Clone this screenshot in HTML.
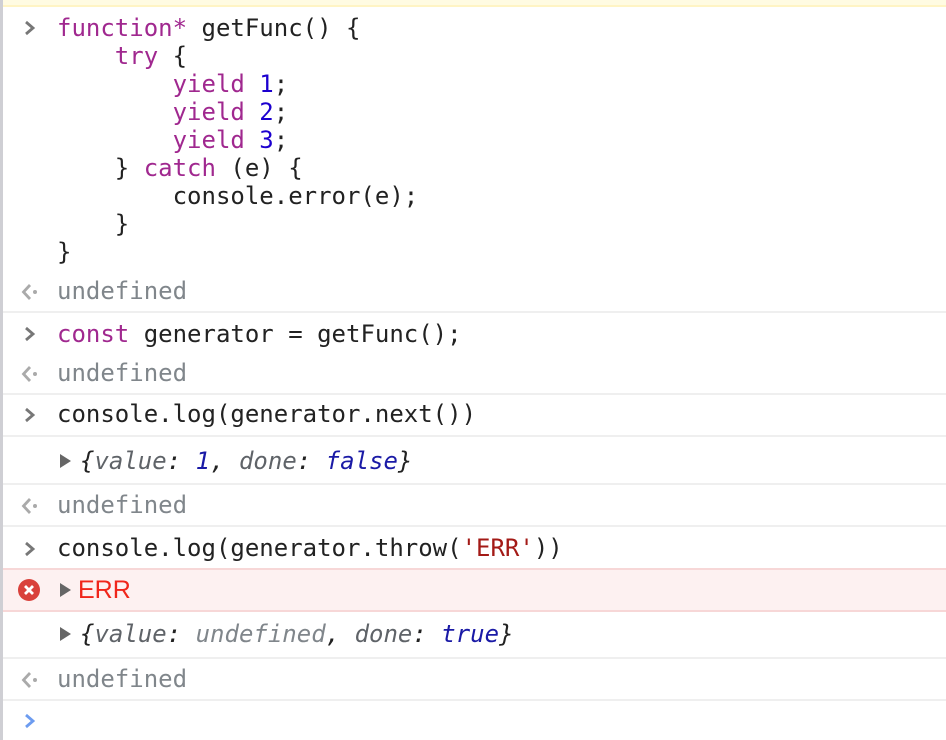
<!DOCTYPE html>
<html><head><meta charset="utf-8"><style>
html,body{margin:0;padding:0;width:946px;height:740px;overflow:hidden;background:#fff;}
body{position:relative;font-family:"DejaVu Sans Mono","Liberation Mono",monospace;font-size:24px;color:#222;}
.bar{position:absolute;left:0;top:0;width:3px;height:740px;background:#cfcfd4;}
.top{position:absolute;left:3px;top:0;right:0;height:5px;background:#fffbe2;border-bottom:2px solid #fff4c4;}
.l{position:absolute;left:57px;height:28px;line-height:28px;white-space:pre;}
.sep{position:absolute;left:3px;right:0;height:2px;background:#efefef;}
.k{color:#a0288f}.n{color:#1c00cf}.s{color:#a31a16}.u{color:#80868b}
.obj{font-style:italic;color:#222}.key{color:#5f6368}.v{color:#1a1aa6}.ud{color:#80868b}
.tri{position:absolute;left:60px;width:0;height:0;border-top:7px solid transparent;border-bottom:7px solid transparent;border-left:11px solid #666;}
.err{position:absolute;left:3px;right:0;top:568px;height:40px;background:#fdf1f1;border-top:2px solid #f7d7d7;border-bottom:2px solid #f7d7d7;}
</style></head><body>
<div class="bar"></div><div class="top"></div>
<svg style="position:absolute;left:23px;top:19px" width="14" height="18"><path d="M3 3 L10 9 L3 15" stroke="#777" stroke-width="2.8" fill="none"/></svg>
<div class="l" style="top:14px"><span class="k">function*</span> getFunc() {</div>
<div class="l" style="top:42px">    <span class="k">try</span> {</div>
<div class="l" style="top:70px">        <span class="k">yield</span> <span class="n">1</span>;</div>
<div class="l" style="top:98px">        <span class="k">yield</span> <span class="n">2</span>;</div>
<div class="l" style="top:126px">        <span class="k">yield</span> <span class="n">3</span>;</div>
<div class="l" style="top:154px">    } <span class="k">catch</span> (e) {</div>
<div class="l" style="top:182px">        console.error(e);</div>
<div class="l" style="top:210px">    }</div>
<div class="l" style="top:238px">}</div>

<svg style="position:absolute;left:20px;top:282px" width="20" height="20"><path d="M10 3 L3.5 10 L10 17" stroke="#aaa" stroke-width="2.8" fill="none"/><circle cx="15" cy="10" r="2" fill="#aaa"/></svg>
<div class="l u" style="top:277px">undefined</div>
<div class="sep" style="top:311px"></div>

<svg style="position:absolute;left:23px;top:325px" width="14" height="18"><path d="M3 3 L10 9 L3 15" stroke="#777" stroke-width="2.8" fill="none"/></svg>
<div class="l" style="top:320px"><span class="k">const</span> generator = getFunc();</div>
<svg style="position:absolute;left:20px;top:364px" width="20" height="20"><path d="M10 3 L3.5 10 L10 17" stroke="#aaa" stroke-width="2.8" fill="none"/><circle cx="15" cy="10" r="2" fill="#aaa"/></svg>
<div class="l u" style="top:359px">undefined</div>
<div class="sep" style="top:393px"></div>

<svg style="position:absolute;left:23px;top:406px" width="14" height="18"><path d="M3 3 L10 9 L3 15" stroke="#777" stroke-width="2.8" fill="none"/></svg>
<div class="l" style="top:400px">console.log(generator.next())</div>
<div class="sep" style="top:435px"></div>
<div class="tri" style="top:454px"></div>
<div class="l obj" style="top:447px;left:80px">{<span class="key">value</span>: <span class="v">1</span>, <span class="key">done</span>: <span class="v">false</span>}</div>
<div class="sep" style="top:483px"></div>

<svg style="position:absolute;left:20px;top:496px" width="20" height="20"><path d="M10 3 L3.5 10 L10 17" stroke="#aaa" stroke-width="2.8" fill="none"/><circle cx="15" cy="10" r="2" fill="#aaa"/></svg>
<div class="l u" style="top:491px">undefined</div>
<div class="sep" style="top:525px"></div>

<svg style="position:absolute;left:23px;top:540px" width="14" height="18"><path d="M3 3 L10 9 L3 15" stroke="#777" stroke-width="2.8" fill="none"/></svg>
<div class="l" style="top:534px">console.log(generator.throw(<span class="s">'ERR'</span>))</div>

<div class="err"></div>
<svg style="position:absolute;left:17px;top:578px" width="24" height="24"><circle cx="12" cy="12" r="11" fill="#d9413b"/><path d="M8 8 L16 16 M16 8 L8 16" stroke="#fff" stroke-width="2.8"/></svg>
<div class="tri" style="top:583px"></div>
<div class="l" style="top:576px;left:78px;font-family:'Liberation Sans',sans-serif;color:#f0261b;font-size:25px">ERR</div>

<div class="tri" style="top:627px"></div>
<div class="l obj" style="top:620px;left:80px">{<span class="key">value</span>: <span class="ud">undefined</span>, <span class="key">done</span>: <span class="v">true</span>}</div>
<div class="sep" style="top:657px"></div>

<svg style="position:absolute;left:20px;top:670px" width="20" height="20"><path d="M10 3 L3.5 10 L10 17" stroke="#aaa" stroke-width="2.8" fill="none"/><circle cx="15" cy="10" r="2" fill="#aaa"/></svg>
<div class="l u" style="top:665px">undefined</div>
<div class="sep" style="top:699px"></div>

<svg style="position:absolute;left:23px;top:712px" width="14" height="18"><path d="M3 3 L10 9 L3 15" stroke="#6d9cf0" stroke-width="2.8" fill="none"/></svg>
</body></html>
